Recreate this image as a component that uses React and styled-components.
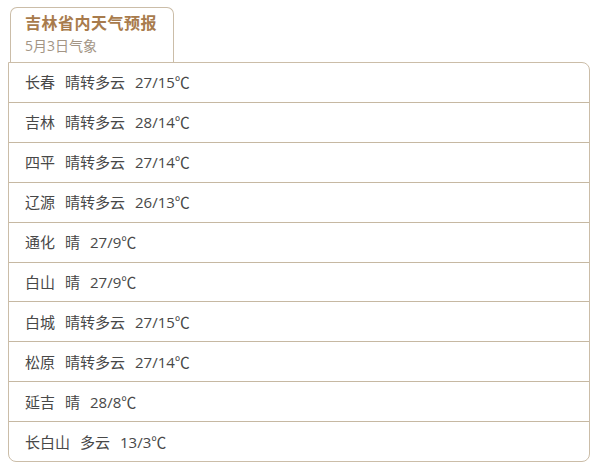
import styled, { createGlobalStyle } from 'styled-components'

const rows = [
    { city: '长春', sky: '晴转多云', temp: '27/15℃' },
    { city: '吉林', sky: '晴转多云', temp: '28/14℃' },
    { city: '四平', sky: '晴转多云', temp: '27/14℃' },
    { city: '辽源', sky: '晴转多云', temp: '26/13℃' },
    { city: '通化', sky: '晴', temp: '27/9℃' },
    { city: '白山', sky: '晴', temp: '27/9℃' },
    { city: '白城', sky: '晴转多云', temp: '27/15℃' },
    { city: '松原', sky: '晴转多云', temp: '27/14℃' },
    { city: '延吉', sky: '晴', temp: '28/8℃' },
    { city: '长白山', sky: '多云', temp: '13/3℃' },
]

export default function App() {
    return (
        <>
            <Global />
            <Page>
                <Tab>
                    <Title>吉林省内天气预报</Title>
                    <Sub>5月3日气象</Sub>
                </Tab>
                <Board>
                    {rows.map((r) => (
                        <Row key={r.city}>
                            <Cell>{r.city}</Cell>
                            <Cell>{r.sky}</Cell>
                            <Cell>{r.temp}</Cell>
                        </Row>
                    ))}
                </Board>
            </Page>
        </>
    )
}

const Global = createGlobalStyle`
    body {
        margin: 0;
        background: #fff;
        font-family: "Open Sans", "Noto Sans CJK SC", sans-serif;
    }
`

const Page = styled.div`
    width: 600px;
    height: 464px;
    padding-top: 7px;
    box-sizing: border-box;
`

const Tab = styled.div`
    width: 164px;
    height: 55px;
    margin-left: 10px;
    box-sizing: border-box;
    border: 1px solid #cbbda8;
    border-bottom: 0;
    border-radius: 7px 7px 0 0;
    padding: 3px 0 0 14px;
    display: flex;
    flex-direction: column;
`

const Title = styled.div`
    font-size: 16px;
    font-weight: 700;
    letter-spacing: 0.5px;
    color: #a87b4c;
    line-height: 24px;
`

const Sub = styled.div`
    font-size: 14px;
    color: #a39585;
    line-height: 20px;
    margin-top: 1px;
`

const Board = styled.div`
    width: 582px;
    height: 400px;
    margin-left: 8px;
    box-sizing: border-box;
    border: 1px solid #cbbda8;
    border-radius: 0 8px 8px 8px;
    display: flex;
    flex-direction: column;
    overflow: hidden;
`

const Row = styled.div`
    flex: 1;
    display: flex;
    align-items: center;
    gap: 10px;
    padding-left: 16px;
    padding-bottom: 1px;
    border-bottom: 1px solid #c6b8a2;
    font-size: 15px;
    color: #484848;

    &:last-child {
        border-bottom: 0;
    }
`

const Cell = styled.span``
